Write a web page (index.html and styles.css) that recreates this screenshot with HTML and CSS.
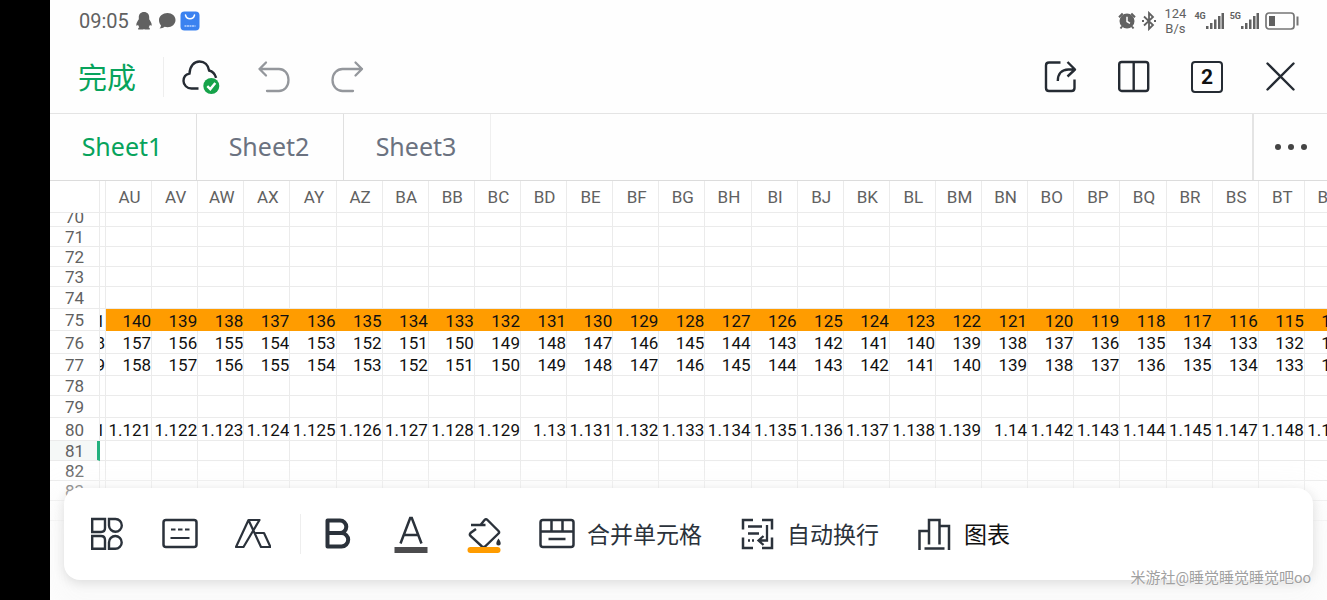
FILE: index.html
```html
<!DOCTYPE html>
<html lang="zh-CN">
<head>
<meta charset="utf-8">
<title>Sheet1</title>
<link rel="stylesheet" href="styles.css">
</head>
<body>
<main class="app">
  <div class="status">
    <span class="clock">09:05</span>
    <svg class="status-qq" width="18" height="20" viewBox="0 0 18 20" fill="#616161"><path d="M9 1c3.400 0 5.200 2.300 5.200 5.500v1.700c1.400 2 2.500 4 2.500 5.700 0 1-.7 1.200-1.700-.1-.3.900-.7 1.700-1.300 2.400 1 .5 1.300 1 1.100 2.300H10c-.7-.4-1.300-.4-2 0H3.200c-.2-1.300.1-1.800 1.100-2.300-.6-.7-1-1.500-1.300-2.400-1 1.300-1.700 1.100-1.700.1 0-1.700 1.100-3.700 2.500-5.700V6.500C3.800 3.300 5.600 1 9 1z"/></svg>
    <svg class="status-chat" width="18" height="18" viewBox="0 0 18 18" fill="#616161"><path d="M9.500 1C14 1 17.500 3.900 17.500 8s-3.500 7.200-8 7.200c-1 0-2-.1-2.900-.4-1.300 1-3 1.600-5.100 1.700.9-.9 1.400-1.900 1.500-3.100C1.700 12 1 10.100 1 8c0-4.100 4-7 8.500-7z"/></svg>
    <svg class="status-store" width="20" height="20" viewBox="0 0 20 20"><rect x=".5" y=".5" width="19" height="19" rx="4" fill="#3b82f0"/><path d="M5.500 4c1.200 5 7.800 5 9 0" fill="none" stroke="#fff" stroke-width="1.500" stroke-linecap="round"/><path d="M4.500 15h11" stroke="#b9d4ff" stroke-width="1.500" stroke-dasharray="2 .5"/></svg>
    <span class="spacer"></span>
    <svg class="status-alarm" width="18" height="18" viewBox="0 0 18 18"><circle cx="9" cy="9" r="7.500" fill="#616161"/><path d="M1 5.200 4.700 1.500M17 5.200l-3.700-3.700M4 14.500 2.500 16.500M14 14.500l1.500 2" stroke="#616161" stroke-width="2"/><path d="M9 4.800v4.700l3 1.800" fill="none" stroke="#fff" stroke-width="1.500"/></svg>
    <svg class="status-bt" width="16" height="20" viewBox="0 0 16 20" fill="none" stroke="#616161" stroke-width="1.800"><path d="M3 5.500l9 8.500-4 4V2l4 4-9 8.500"/><path d="M1 10h2M13 10h2" stroke-width="2"/></svg>
    <span class="speed">124<br>B/s</span>
    <span class="network">4G</span>
    <svg class="status-bars" width="18" height="18" viewBox="0 0 18 18" fill="#616161"><path d="M0 14h2.500v3H0zM4 11h2.500v6H4zM8 7.500h2.500V17H8zM12 4h2.500v13H12zM15.500 1H18v16h-2.500z"/></svg>
    <span class="network">5G</span>
    <svg class="status-bars" width="18" height="18" viewBox="0 0 18 18" fill="#616161"><path d="M0 14h2.500v3H0zM4 11h2.500v6H4zM8 7.500h2.500V17H8zM12 4h2.500v13H12zM15.500 1H18v16h-2.500z"/></svg>
    <svg class="status-battery" width="34" height="18" viewBox="0 0 34 18"><rect x="1" y="1" width="28" height="16" rx="3" fill="none" stroke="#757575" stroke-width="1.700"/><rect x="4" y="4" width="6" height="10" fill="#616161"/><path d="M32.500 4.500v9" stroke="#757575" stroke-width="2"/></svg>
  </div>

  <header class="topbar">
    <button class="done">完成</button>
    <span class="divider"></span>
    <div class="tools">
      <button aria-label="已保存到云端"><svg width="40" height="40" viewBox="0 0 40 40"><path d="M17.500 31.500H10.500C6 31.500 2.500 28 2.500 24c0-3.800 2.500-6.700 6-7.400C8.800 9 13 4.500 18.500 4.500c5 0 8.700 3.400 9.600 9 3.700 1 5.900 3.600 7 7.300" fill="none" stroke="#252b33" stroke-width="2.400"/><circle cx="30.300" cy="29" r="8" fill="#16a34a"/><path d="M26.300 29.100l3 3 5-6.200" fill="none" stroke="#fff" stroke-width="2.400"/></svg></button>
      <button aria-label="撤销"><svg width="40" height="40" viewBox="0 0 40 40" fill="none" stroke="#94979c" stroke-width="2.300" stroke-linecap="round" stroke-linejoin="round"><path d="M12 5.500 5.500 12l6.500 6.500M5.500 12h19.500c5.300 0 9.500 4.500 9.500 11s-4.200 11-9.500 11H13"/></svg></button>
      <button aria-label="恢复"><svg width="40" height="40" viewBox="0 0 40 40" fill="none" stroke="#94979c" stroke-width="2.300" stroke-linecap="round" stroke-linejoin="round"><path d="M28.500 5.500 35 12l-6.500 6.500M35 12H15.500C10.200 12 5.500 16.500 5.500 23s4.700 11 10 11H26"/></svg></button>
    </div>
    <span class="spacer"></span>
    <div class="tools">
      <button aria-label="分享"><svg width="40" height="40" viewBox="0 0 40 40" fill="none" stroke="#252b33" stroke-width="2.400" stroke-linejoin="round"><path d="M19.500 5.500H8Q5 5.500 5 8.500V31Q5 34 8 34h22.500q3 0 3-3v-8.500M16.800 24c0-7 4-11.500 10.500-11.500H34M26.500 5l7.500 7.500-7.500 7"/></svg></button>
      <button aria-label="分屏"><svg width="40" height="40" viewBox="0 0 40 40" fill="none" stroke="#252b33" stroke-width="2.400"><rect x="5.200" y="5" width="29" height="29" rx="2.500"/><path d="M19.700 5.500v28"/></svg></button>
      <button class="count" aria-label="已打开的文档"><span>2</span></button>
      <button aria-label="关闭"><svg width="40" height="40" viewBox="0 0 40 40" fill="none" stroke="#252b33" stroke-width="2.400" stroke-linecap="round"><path d="M7.500 6.500l26 26M33.500 6.500l-26 26"/></svg></button>
    </div>
  </header>

  <nav class="tabs">
    <button class="tab active">Sheet1</button>
    <button class="tab">Sheet2</button>
    <button class="tab">Sheet3</button>
    <span class="spacer"></span>
    <button class="more" aria-label="更多"><i></i><i></i><i></i></button>
  </nav>

  <section class="sheet">
    <table class="grid" id="grid"></table>
  </section>

  <footer class="toolbar">
    <button aria-label="工具"><svg width="36" height="36" viewBox="0 0 36 36" fill="none" stroke="#2b323b" stroke-width="2.400"><path d="M3.200 3H16v9q0 4-4 4H3.200zM20 3h6.500a6.400 6.400 0 1 1-6.500 6.500zM3.200 20H12q4 0 4 4v8.800H3.200zM26.300 20a6.400 6.400 0 1 1 0 12.800H20v-6.400a6.300 6.300 0 0 1 6.300-6.400z"/></svg></button>
    <button aria-label="键盘"><svg width="36" height="36" viewBox="0 0 36 36" fill="none" stroke="#2b323b" stroke-width="2.500"><rect x="1.500" y="4" width="33" height="27" rx="2.500"/><path d="M9 13.500h4.500M16 13.500h4.500M23 13.500h4.500M8.500 22h19" stroke-width="2.200"/></svg></button>
    <button aria-label="样式"><svg width="36" height="36" viewBox="0 0 36 36" fill="none" stroke="#2b323b" stroke-width="2.200" stroke-linejoin="round"><path d="M1 31h7.500L24.500 4H13.500zM13.500 4l12.500 27h9.500L29 17h-8.500"/></svg></button>
    <span class="divider"></span>
    <button aria-label="加粗"><svg width="36" height="36" viewBox="0 0 36 36" fill="none" stroke="#2b323b" stroke-width="4" stroke-linejoin="round"><path d="M7.500 4.500H20a6.300 6.300 0 0 1 0 12.600H7.500zM7.500 17.100h14a6.700 6.700 0 0 1 0 13.400h-14z"/></svg></button>
    <button aria-label="字体颜色"><svg width="36" height="40" viewBox="0 0 36 40" fill="none"><path d="M7.500 29.500 17.200 4h1.600l9.700 25.500M11.500 21h13" stroke="#2b323b" stroke-width="2.500"/><path d="M1.500 36h33" stroke="#4b4b4d" stroke-width="6"/></svg></button>
    <button aria-label="填充颜色"><svg width="36" height="40" viewBox="0 0 36 40" fill="none"><path d="M5 11h14.500M14.500 11l4-5q1.500-1.500 3 0l11 11q1.200 1.300 0 2.500L19 32.500q-1.500 1-3 0L4.500 22q-1.300-1.500 0-3l5.500-4" stroke="#2b323b" stroke-width="2.400"/><path d="M32.500 24.500c-3 4-2.800 7 0 7s3-3 0-7z" fill="#2b323b"/><path d="M4.500 36h27" stroke="#ff9c00" stroke-width="6" stroke-linecap="round"/></svg></button>
    <button class="labelled"><svg width="36" height="36" viewBox="0 0 36 36" fill="none" stroke="#2b323b" stroke-width="2.500"><rect x="1.500" y="4" width="33" height="27" rx="2.500"/><path d="M2 15.500h32M12.500 4.500v11M23.500 4.500v11M9.500 23h17"/></svg><span>合并单元格</span></button>
    <button class="labelled"><svg width="36" height="36" viewBox="0 0 36 36" fill="none" stroke="#2b323b" stroke-width="2.500"><path d="M4 13.500V4h10M23 4h10v9.500M4 21.500V32h10M23 32h10V21.500"/><path d="M9 10.500h14M9 17.500h11M9 24.500h2M13 24.500h2M28 9v15.500h-7M24.500 20l-5 4.500 5 4.500" stroke-width="2.300"/></svg><span>自动换行</span></button>
    <button class="labelled chart"><svg width="36" height="36" viewBox="0 0 36 36" fill="none" stroke="#2b323b" stroke-width="2.500"><path d="M3.500 34V15H13M13 28.500V4h10.500v24.500M23.500 10H33v24M8.500 32.500h20"/></svg><span>图表</span></button>
  </footer>
  <p class="watermark">米游社@睡觉睡觉睡觉吧oo</p>
</main>
<script src="grid.js"></script>
</body>
</html>
```

FILE: styles.css
```css
* { box-sizing: border-box; }

body {
  margin: 0;
  padding-left: 50px;
  background: #000;
  font-family: Roboto, "Noto Sans CJK SC", sans-serif;
}

button {
  display: flex;
  align-items: center;
  justify-content: center;
  padding: 0;
  border: 0;
  background: none;
  font: inherit;
  color: inherit;
}

svg { display: block; flex: none; }

.app {
  position: relative;
  display: flex;
  flex-direction: column;
  height: 100vh;
  overflow: hidden;
  background: #fefefe;
}

.spacer { flex: 1; }

.status {
  display: flex;
  align-items: center;
  height: 41px;
  padding: 0 28px 0 29px;
  color: #616161;
}
.clock { margin-right: 6px; font-size: 20px; }
.status-chat { margin: 0 4px 0 5px; }
.status-alarm { margin-right: 5px; }
.status-bt { margin-right: 7px; }
.speed {
  margin-right: 8px;
  font-size: 13px;
  line-height: 15px;
  text-align: center;
}
.network {
  align-self: flex-start;
  margin-top: 10px;
  font-size: 9px;
  line-height: 12px;
  font-weight: 700;
}
.status-bars { margin-right: 6px; }

.topbar {
  display: flex;
  align-items: center;
  height: 72px;
  padding: 0 27px 0 28px;
}
.done {
  margin-right: 27px;
  padding-bottom: 3px;
  font-family: "Noto Sans CJK SC", sans-serif;
  font-size: 29px;
  line-height: 40px;
  color: #07a35c;
}
.divider { width: 1px; height: 40px; background: #eee; }
.topbar .divider { margin-right: 17px; }
.tools { display: flex; gap: 33px; }
.tools button { width: 40px; height: 40px; }
.count span {
  width: 32px;
  height: 32px;
  border: 2px solid #252b33;
  border-radius: 4px;
  font-family: Roboto, sans-serif;
  font-size: 21px;
  line-height: 29px;
  font-weight: 700;
  text-align: center;
  color: #111;
}

.tabs {
  display: flex;
  height: 67px;
  border-top: 1px solid #e4e4e4;
  font-family: "Noto Sans", sans-serif;
  font-size: 25px;
  color: #6b7280;
}
.tab { width: 147px; padding: 0 2px 2px 0; border-right: 1px solid #e0e0e0; }
.tab:nth-child(3) { border-color: #efefef; }
.tab.active { color: #07a35c; }
.more { width: 75px; gap: 7px; border-left: 2px solid #e4e4e4; }
.more i { width: 6px; height: 6px; border-radius: 50%; background: #444; }

.sheet { flex: 1; overflow: hidden; background: #fff; }
.grid {
  width: calc(100% + 24px);
  table-layout: fixed;
  border-collapse: separate;
  border-spacing: 0;
  border-top: 1px solid #dcdcdc;
  font-size: 17px;
  color: #111;
}
.col-index { width: 50px; }
.col-cut { width: 6px; }
.grid th, .grid td {
  height: inherit;
  padding: 1px 0 0;
  overflow: hidden;
  border-right: 1px solid #ebebeb;
  border-bottom: 1px solid #ebebeb;
  font-weight: 400;
  line-height: 18px;
  white-space: nowrap;
}
.grid th { color: #616161; }
.grid thead th { padding-left: 2px; line-height: 30px; }
.grid td { text-align: right; }
.cut-value { display: flex; justify-content: flex-end; }
.h14 { height: 14px; }
.h20 { height: 20px; }
.h22 { height: 22px; }
.h23 { height: 23px; }
.h32 { height: 32px; }
.grid .h14 th { padding: 0; }
.h14 th div {
  display: flex;
  align-items: flex-end;
  height: 13px;
  justify-content: center;
  overflow: hidden;
}
.grid .filled td { padding-top: 2px; }
.filled td.cell { background: #ff9c00; border-color: #ff9c00; }
.current th { background: #f5f8f7; }
.grid .current th { border-right: 3px solid #22b07d; padding-left: 2px; }

.toolbar {
  position: absolute;
  left: 14px;
  right: 14px;
  bottom: 20px;
  display: flex;
  align-items: center;
  gap: 37px;
  height: 92px;
  padding: 0 25px;
  border-radius: 16px;
  background: #fff;
  box-shadow: 0 3px 12px rgba(0, 0, 0, 0.12), 0 20px 30px 20px rgba(250, 250, 250, 0.9);
  font-family: "Noto Sans CJK SC", sans-serif;
  font-size: 23px;
  color: #2b323b;
}
.toolbar button { min-width: 36px; }
.toolbar .divider { margin: 0 -18px 0 -8px; }
.toolbar .labelled { gap: 12px; }
.toolbar .labelled span { padding-bottom: 3px; }
.toolbar .chart { color: #111; }

.watermark {
  position: absolute;
  right: 16px;
  bottom: 12px;
  margin: 0;
  font-family: Roboto, "Noto Sans CJK SC", sans-serif;
  font-size: 15px;
  line-height: 20px;
  color: #a0a0a0;
  text-shadow: 0 0 2px #fff;
}
```

FILE: grid.js
```js
const columns = ["AU", "AV", "AW", "AX", "AY", "AZ"];
for (const letter of "ABCDEFGHIJKLMNOPQRSTU") columns.push("B" + letter);

const countdown = (start) => columns.map((_, i) => String(start - i));

const ratios = [
  "1.121", "1.122", "1.123", "1.124", "1.125", "1.126", "1.127", "1.128", "1.129",
  "1.13", "1.131", "1.132", "1.133", "1.134", "1.135", "1.136", "1.137", "1.138", "1.139",
  "1.14", "1.142", "1.143", "1.144", "1.145", "1.147", "1.148", "1.149"
];

const rows = [
  { n: 70, h: 14 }, { n: 71, h: 20 }, { n: 72, h: 20 }, { n: 73, h: 20 }, { n: 74, h: 22 },
  { n: 75, h: 22, cut: "1", values: countdown(140), cls: "filled" },
  { n: 76, h: 23, cut: "8", values: countdown(157) },
  { n: 77, h: 22, cut: "9", values: countdown(158) },
  { n: 78, h: 20 }, { n: 79, h: 22 },
  { n: 80, h: 23, cut: "1", values: ratios },
  { n: 81, h: 20, cls: "current" }, { n: 82, h: 20 }, { n: 83, h: 20 }, { n: 84, h: 20 }
];

const head = `<colgroup><col class="col-index"><col class="col-cut">${columns.map(() => "<col>").join("")}</colgroup>
<thead><tr class="h32"><th></th><th></th>${columns.map((c) => `<th scope="col">${c}</th>`).join("")}</tr></thead>`;

const body = rows.map((row) => {
  const cells = columns.map((_, i) => `<td class="cell">${row.values ? row.values[i] : ""}</td>`).join("");
  const cut = `<td><div class="cut-value">${row.cut || ""}</div></td>`;
  return `<tr class="h${row.h} ${row.cls || ""}"><th scope="row"><div>${row.n}</div></th>${cut}${cells}</tr>`;
}).join("");

document.getElementById("grid").innerHTML = head + `<tbody>${body}</tbody>`;
```
